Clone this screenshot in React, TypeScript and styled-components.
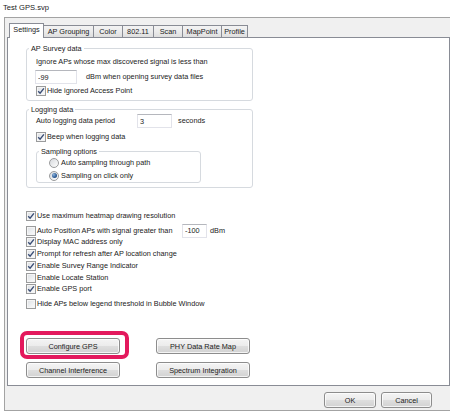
import React from "react";
import styled, { createGlobalStyle } from "styled-components";

const GlobalStyle = createGlobalStyle`
  html, body { margin: 0; padding: 0; background: #fff; }
  body {
    font-family: "Liberation Sans", Arial, sans-serif;
    font-size: 7.3px;
    color: #222;
  }
  * { box-sizing: border-box; }
`;

const Screen = styled.div`
  width: 450px;
  height: 413px;
  overflow: hidden;
  background: #fff;
`;

const Caption = styled.div`
  height: 17px;
  padding: 2px 0 0 3px;
  line-height: 12px;
  font-size: 7.6px;
  color: #1a1a1a;
`;

const Window = styled.div`
  margin-left: 4px;
  width: 447px;
  background: #f0f0f0;
  border: 1px solid #a3a3a3;
  padding: 5px 0 0 2px;
  display: flex;
  flex-direction: column;
`;

const TabStrip = styled.div`
  display: flex;
  align-items: flex-end;
  height: 14px;
  padding-left: 2px;
  position: relative;
  z-index: 1;
`;

const Tab = styled.div<{ $active?: boolean; $w: number }>`
  width: ${(p) => p.$w}px;
  height: ${(p) => (p.$active ? "15px" : "12px")};
  margin-bottom: ${(p) => (p.$active ? "-1px" : "0")};
  margin-left: -1px;
  &:first-child { margin-left: 0; }
  padding: ${(p) => (p.$active ? "0 0 2px" : "0")};
  border: 1px solid #898c95;
  border-bottom: none;
  line-height: ${(p) => (p.$active ? "12px" : "11px")};
  text-align: center;
  white-space: nowrap;
  background: ${(p) =>
    p.$active ? "#fff" : "linear-gradient(#f3f3f3 0%, #ebebeb 50%, #dedede 100%)"};
  position: relative;
  z-index: ${(p) => (p.$active ? 2 : 1)};
`;

const Panel = styled.div`
  height: 349px;
  border: 1px solid #898c95;
  background: #fff;
  padding: 6px 0 0 18px;
  display: flex;
  flex-direction: column;
  align-items: flex-start;
`;

const Group = styled.fieldset<{ $width: number; $top?: number }>`
  margin: ${(p) => p.$top ?? 0}px 0 0 0;
  padding: 0;
  min-width: 0;
  width: ${(p) => p.$width}px;
  border: 1px solid #d6dadf;
  border-radius: 3px;
`;

const GroupLabel = styled.legend`
  margin-left: 2px;
  padding: 0 2px;
  height: 9px;
  line-height: 9px;
  font-size: 7.3px;
  color: #222;
`;

const GroupBody = styled.div<{ $pad: string }>`
  display: flex;
  flex-direction: column;
  padding: ${(p) => p.$pad};
`;

const Row = styled.div<{ $h: number; $top?: number }>`
  display: flex;
  align-items: center;
  height: ${(p) => p.$h}px;
  margin-top: ${(p) => p.$top ?? 0}px;
  white-space: nowrap;
  line-height: 10px;
`;

const Label = styled.span<{ $width?: number; $gap?: number }>`
  display: inline-block;
  width: ${(p) => (p.$width ? `${p.$width}px` : "auto")};
  margin-left: ${(p) => p.$gap ?? 0}px;
  flex-shrink: 0;
`;

const TextBox = styled.input<{ $w: number; $gap?: number }>`
  width: ${(p) => p.$w}px;
  height: 14px;
  flex-shrink: 0;
  margin: 0 0 0 ${(p) => p.$gap ?? 0}px;
  padding: 0 0 0 2px;
  font: inherit;
  color: #222;
  background: #fff;
  border: 1px solid #e2e3ea;
  border-top-color: #b5b7bd;
  outline: none;
`;

const Box = styled.span`
  width: 10px;
  height: 10px;
  flex-shrink: 0;
  border: 1px solid #9a9b9c;
  background: linear-gradient(135deg, #dcdfe3 0%, #eff1f3 60%, #fbfbfb 100%);
  box-shadow: inset 0 0 0 1px #f5f5f5;
  display: flex;
  align-items: center;
  justify-content: center;
  margin-right: 1px;
`;

const Round = styled.span`
  width: 10px;
  height: 10px;
  flex-shrink: 0;
  border-radius: 50%;
  border: 1px solid #9a9b9c;
  background: linear-gradient(135deg, #d6d9dd 0%, #f2f3f4 70%, #fff 100%);
  display: flex;
  align-items: center;
  justify-content: center;
`;

const Dot = styled.span`
  width: 5px;
  height: 5px;
  border-radius: 50%;
  background: radial-gradient(circle at 35% 35%, #8fb6de 0%, #2c5a94 60%, #1c3b66 100%);
`;

const CheckList = styled.div`
  display: flex;
  flex-direction: column;
  margin-top: 22px;
`;

const ButtonGrid = styled.div`
  display: grid;
  grid-template-columns: 94px 94px;
  column-gap: 36px;
  row-gap: 8px;
  margin-top: 28px;
`;

const PushButton = styled.button<{ $w?: number }>`
  width: ${(p) => (p.$w ? `${p.$w}px` : "100%")};
  height: 16px;
  padding: 0;
  margin: 0;
  font: inherit;
  color: #222;
  border: 1px solid #8d8d8d;
  border-radius: 3px;
  background: linear-gradient(#f4f4f4 0%, #ececec 48%, #dedede 52%, #d2d2d2 100%);
  box-shadow: inset 0 0 0 1px rgba(255, 255, 255, 0.75);
  white-space: nowrap;
`;

const Highlighted = styled.div`
  position: relative;
`;

const Marker = styled.span`
  position: absolute;
  left: -6px;
  right: -9px;
  top: -7px;
  bottom: -5px;
  border: 4px solid #e3195d;
  border-radius: 7px;
  pointer-events: none;
`;

const Footer = styled.div`
  height: 24px;
  display: flex;
  justify-content: flex-end;
  align-items: flex-start;
  gap: 5px;
  padding: 6px 18px 0 0;
`;

const Check = ({ on }: { on?: boolean }) => (
  <Box>
    {on && (
      <svg width="8" height="8" viewBox="0 0 8 8">
        <path d="M1.2 4.2 L3.1 6.2 L6.9 1.4" fill="none" stroke="#3a4d75" strokeWidth="1.4" />
      </svg>
    )}
  </Box>
);

const Radio = ({ on }: { on?: boolean }) => <Round>{on && <Dot />}</Round>;

const CheckRow = ({ on, text, top, h = 11.75 }: { on?: boolean; text: string; top?: number; h?: number }) => (
  <Row $h={h} $top={top}>
    <Check on={on} />
    <Label>{text}</Label>
  </Row>
);

const tabs: [string, number][] = [
  ["Settings", 35],
  ["AP Grouping", 51],
  ["Color", 30],
  ["802.11", 32],
  ["Scan", 30],
  ["MapPoint", 40],
  ["Profile", 27],
];

export default function App() {
  return (
    <Screen>
      <GlobalStyle />
      <Caption>Test GPS.svp</Caption>
      <Window>
        <TabStrip>
          {tabs.map(([t, w], i) => (
            <Tab key={t} $w={w} $active={i === 0}>
              {t}
            </Tab>
          ))}
        </TabStrip>
        <Panel>
          <Group $width={227}>
            <GroupLabel>AP Survey data</GroupLabel>
            <GroupBody $pad="3px 0 3px 9px">
              <Row $h={12}>
                <Label>Ignore APs whose max discovered signal is less than</Label>
              </Row>
              <Row $h={14} $top={2}>
                <TextBox $w={42} $gap={-1} readOnly defaultValue="-99" />
                <Label $gap={9}>dBm when opening survey data files</Label>
              </Row>
              <CheckRow on text="Hide ignored Access Point" top={1} h={12} />
            </GroupBody>
          </Group>

          <Group $width={227} $top={4}>
            <GroupLabel>Logging data</GroupLabel>
            <GroupBody $pad="0 0 4px 9px">
              <Row $h={14}>
                <Label $width={101}>Auto logging data period</Label>
                <TextBox $w={35} readOnly defaultValue="3" />
                <Label $gap={6}>seconds</Label>
              </Row>
              <CheckRow on text="Beep when logging data" top={3} h={12} />
              <Group $width={165} $top={4}>
                <GroupLabel>Sampling options</GroupLabel>
                <GroupBody $pad="0 0 0 12px">
                  <Row $h={13}>
                    <Radio />
                    <Label>&nbsp;Auto sampling through path</Label>
                  </Row>
                  <Row $h={13}>
                    <Radio on />
                    <Label>&nbsp;Sampling on click only</Label>
                  </Row>
                </GroupBody>
              </Group>
            </GroupBody>
          </Group>

          <CheckList>
            <CheckRow on text="Use maximum heatmap drawing resolution" />
            <Row $h={11.75} $top={3}>
              <Check />
              <Label $width={145}>Auto Position APs with signal greater than</Label>
              <TextBox $w={25} readOnly defaultValue="-100" />
              <Label $gap={3}>dBm</Label>
            </Row>
            <CheckRow on text="Display MAC address only" />
            <CheckRow on text="Prompt for refresh after AP location change" />
            <CheckRow on text="Enable Survey Range Indicator" />
            <CheckRow text="Enable Locate Station" />
            <CheckRow on text="Enable GPS port" />
            <CheckRow text="Hide APs below legend threshold in Bubble Window" top={3.2} />
          </CheckList>

          <ButtonGrid>
            <Highlighted>
              <PushButton>Configure GPS</PushButton>
              <Marker />
            </Highlighted>
            <PushButton>PHY Data Rate Map</PushButton>
            <PushButton>Channel Interference</PushButton>
            <PushButton>Spectrum Integration</PushButton>
          </ButtonGrid>
        </Panel>
        <Footer>
          <PushButton $w={52}>OK</PushButton>
          <PushButton $w={51}>Cancel</PushButton>
        </Footer>
      </Window>
    </Screen>
  );
}
